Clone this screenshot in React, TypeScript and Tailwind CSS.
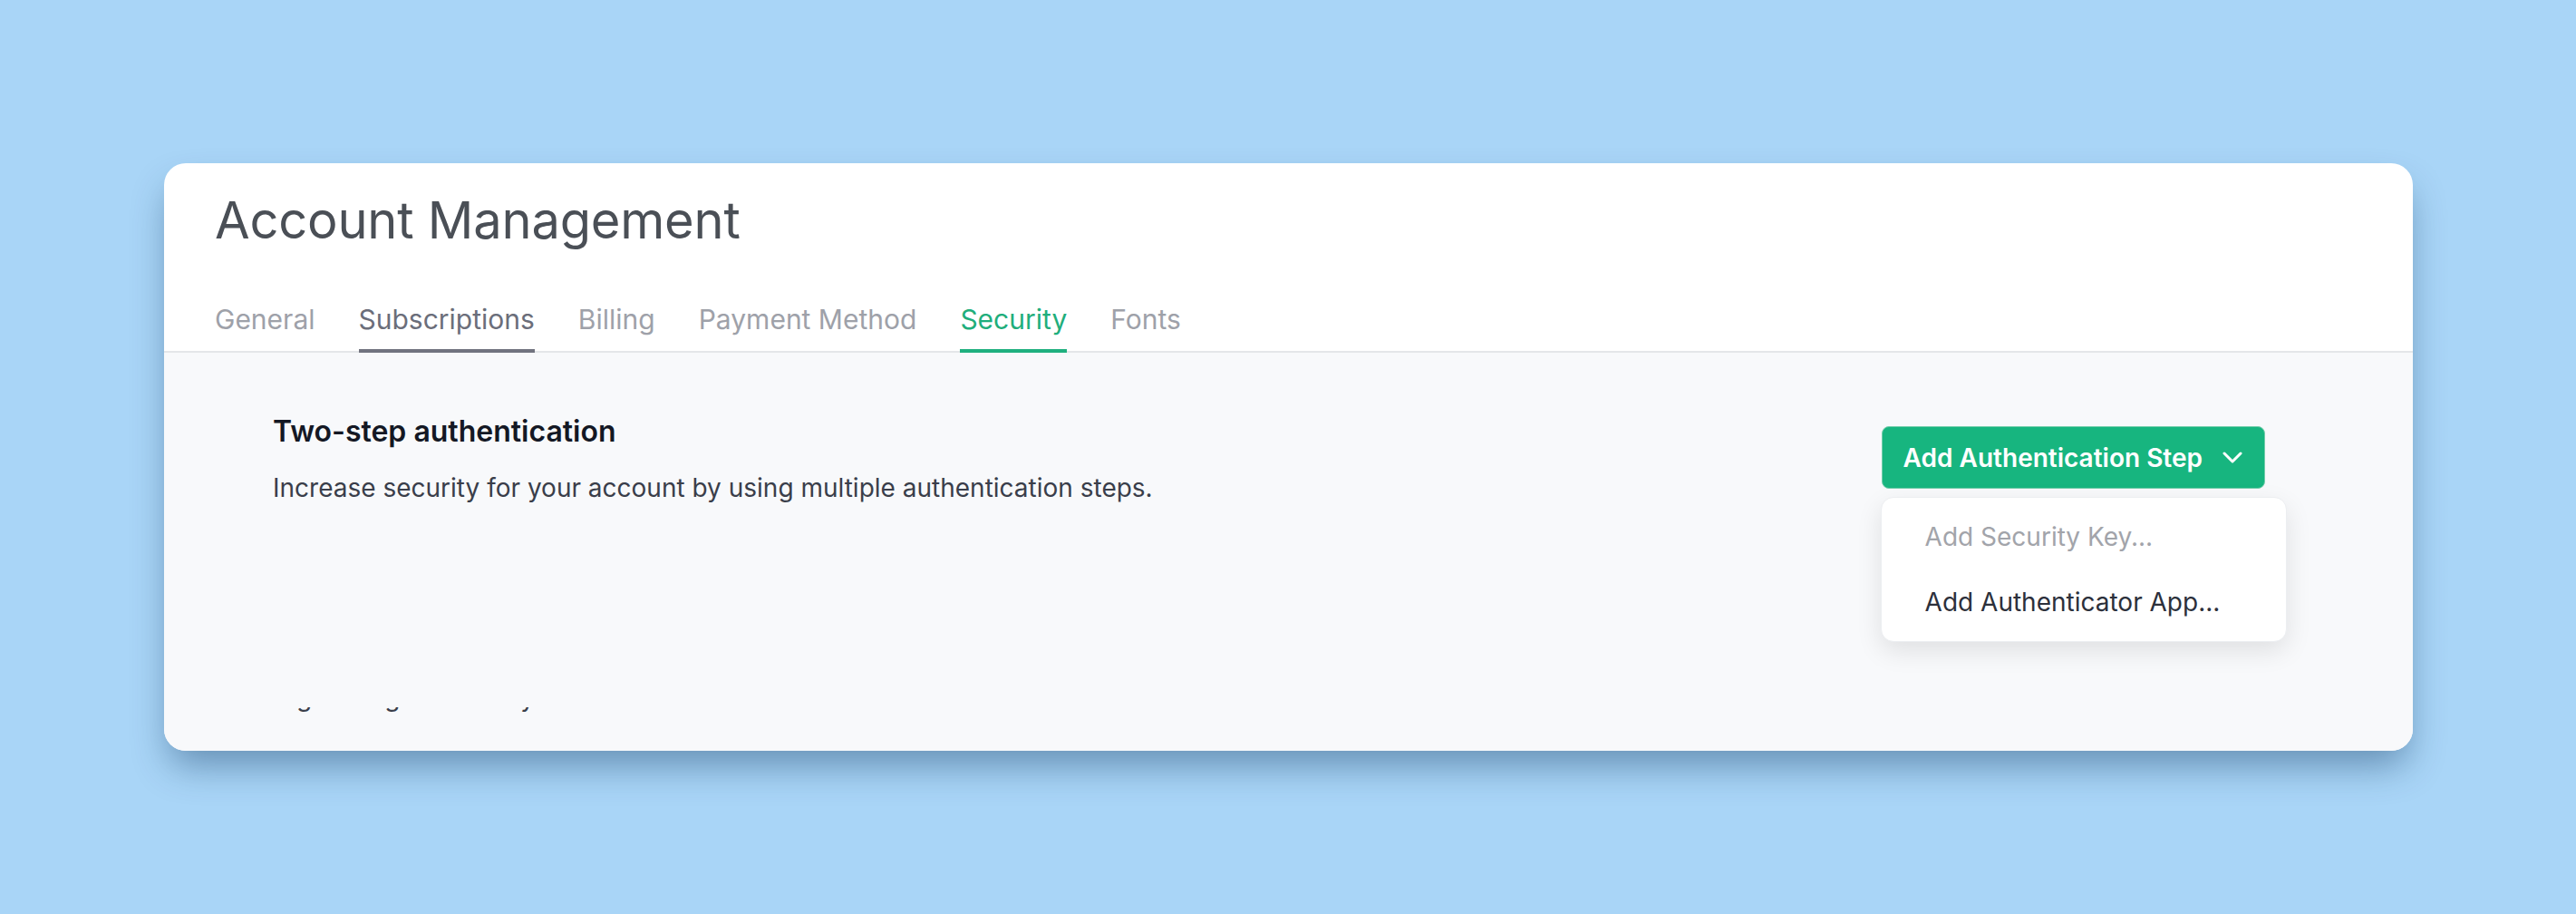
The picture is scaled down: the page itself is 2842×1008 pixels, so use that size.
import React from "react";

const tabs = [
  { label: "General", state: "idle" },
  { label: "Subscriptions", state: "hover" },
  { label: "Billing", state: "idle" },
  { label: "Payment Method", state: "idle" },
  { label: "Security", state: "active" },
  { label: "Fonts", state: "idle" },
];

export default function App() {
  return (
    <div
      className="min-h-screen w-full bg-[#a9d5f7] pt-[180px] pl-[181px] pr-[180px] pb-[180px]"
      style={{ fontFamily: "Inter, 'Noto Sans', sans-serif" }}
    >
      <div className="flex h-[648px] flex-col overflow-hidden rounded-[24px] bg-white shadow-[0_22px_40px_-6px_rgba(20,60,100,0.45)]">
        {/* Header */}
        <div className="border-b-2 border-[#e4e6e9] pl-[56px] pt-[30px]">
          <h1 className="text-[56px] leading-[66px] font-normal tracking-[-0.2px] text-[#4a4f56]">
            Account Management
          </h1>
          <div className="mt-[56px] -mb-[2px] flex gap-[48px]">
            {tabs.map((t) => (
              <div
                key={t.label}
                className={
                  t.state === "active"
                    ? "border-b-4 border-[#1fb07f] pb-[13px] text-[30px] leading-[40px] text-[#1fae7c]"
                    : t.state === "hover"
                    ? "border-b-4 border-[#71737f] pb-[13px] text-[30px] leading-[40px] text-[#6b6e7a]"
                    : "border-b-4 border-transparent pb-[13px] text-[30px] leading-[40px] text-[#9ea1a9]"
                }
              >
                {t.label}
              </div>
            ))}
          </div>
        </div>

        {/* Content */}
        <div className="flex-1 bg-[#f8f9fb] pl-[120px] pr-[163px] pt-[67px]">
          <div className="flex justify-between">
            <div>
              <div className="text-[32px] leading-[40px] font-semibold text-[#141824]">
                Two-step authentication
              </div>
              <div className="mt-[22px] text-[28px] leading-[40px] text-[#3a3e4a]">
                Increase security for your account by using multiple authentication steps.
              </div>
              <div className="mt-[222px] h-[8px] overflow-hidden">
                <div className="-mt-[31px] flex text-[28px] leading-[40px] text-[#3a3e4a]">
                  <span className="ml-[26px]">g</span>
                  <span className="ml-[80px]">g</span>
                  <span className="ml-[133px]">y</span>
                </div>
              </div>
            </div>
            <div className="relative mt-[14px]">
              <button className="flex h-[69px] items-center rounded-[8px] border border-[#74cdab] bg-[#17b57f] pl-[23px] pr-[24px] text-[28px] font-semibold text-white">
                <span className="leading-[40px]">Add Authentication Step</span>
                <svg
                  className="ml-[22px]"
                  width="22"
                  height="13"
                  viewBox="0 0 22 13"
                  fill="none"
                >
                  <polyline
                    points="2,2 11,11 20,2"
                    stroke="white"
                    strokeWidth="3"
                    strokeLinecap="round"
                    strokeLinejoin="round"
                  />
                </svg>
              </button>
              <div className="absolute left-[-1px] top-[78px] w-[448px] rounded-[14px] border border-[#eceef1] bg-white py-[7px] shadow-[0_10px_28px_rgba(0,0,0,0.10)]">
                <div className="px-[48px] py-[16px] text-[28px] leading-[40px] text-[#a2a4aa]">
                  Add Security Key...
                </div>
                <div className="px-[48px] py-[16px] text-[28px] leading-[40px] text-[#2c303b]">
                  Add Authenticator App...
                </div>
              </div>
            </div>
          </div>
        </div>
      </div>
    </div>
  );
}
